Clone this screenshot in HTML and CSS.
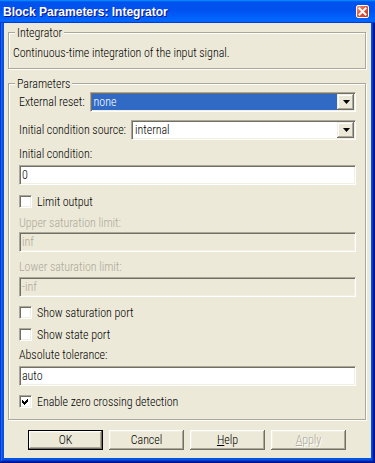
FILE: index.html
```html
<!DOCTYPE html>
<html>
<head>
<meta charset="utf-8">
<title>Block Parameters: Integrator</title>
<link rel="stylesheet" href="styles.css">
</head>
<body>
<div class="window">
  <div class="titlebar">
    <span class="title">Block Parameters: Integrator</span>
    <span class="close" aria-label="Close">
      <svg width="11" height="11" viewBox="0 0 11 11"><path d="M2.5 2.5 L8.5 8.5 M8.5 2.5 L2.5 8.5" stroke="#fff" stroke-width="2" stroke-linecap="square"/></svg>
    </span>
  </div>
  <div class="client">
    <fieldset class="group group-desc">
      <legend>Integrator</legend>
      <p class="desc">Continuous-time integration of the input signal.</p>
    </fieldset>

    <fieldset class="group group-params">
      <legend>Parameters</legend>
      <div class="params">
        <div class="inline-field">
          <span class="label">External reset:</span>
          <div class="combo">
            <span class="combo-value selected">none</span>
            <span class="combo-btn"><svg width="7" height="4" viewBox="0 0 7 4"><path d="M0 0 H7 L3.5 4 Z" fill="#000"/></svg></span>
          </div>
        </div>
        <div class="inline-field mt-8">
          <span class="label">Initial condition source:</span>
          <div class="combo">
            <span class="combo-value">internal</span>
            <span class="combo-btn"><svg width="7" height="4" viewBox="0 0 7 4"><path d="M0 0 H7 L3.5 4 Z" fill="#000"/></svg></span>
          </div>
        </div>
        <span class="label block mt-7">Initial condition:</span>
        <div class="edit mt-4">0</div>
        <div class="check-row mt-10">
          <span class="checkbox"></span>
          <span class="check-label">Limit output</span>
        </div>
        <span class="label block disabled-text mt-8">Upper saturation limit:</span>
        <div class="edit disabled mt-2">inf</div>
        <span class="label block disabled-text mt-8">Lower saturation limit:</span>
        <div class="edit disabled mt-3">-inf</div>
        <div class="check-row mt-9">
          <span class="checkbox"></span>
          <span class="check-label">Show saturation port</span>
        </div>
        <div class="check-row mt-9">
          <span class="checkbox"></span>
          <span class="check-label">Show state port</span>
        </div>
        <span class="label block mt-7">Absolute tolerance:</span>
        <div class="edit mt-4">auto</div>
        <div class="check-row mt-9">
          <span class="checkbox checked"><svg width="11" height="11" viewBox="0 0 11 11"><path d="M2 4 L4 6 L8 2 L8 5 L4 9 L2 7 Z" fill="#000" shape-rendering="crispEdges"/></svg></span>
          <span class="check-label">Enable zero crossing detection</span>
        </div>
      </div>
    </fieldset>

    <div class="buttons">
      <span class="btn default">OK</span>
      <span class="btn">Cancel</span>
      <span class="btn"><u>H</u>elp</span>
      <span class="btn disabled"><u>A</u>pply</span>
    </div>
  </div>
</div>
</body>
</html>
```

FILE: styles.css
```css
* { box-sizing: border-box; }

html, body {
  margin: 0;
  padding: 0;
}

body {
  width: 375px;
  height: 463px;
  overflow: hidden;
  font-family: "Roboto Condensed", "Liberation Sans", Arial, sans-serif;
  font-size: 12px;
  font-weight: 300;
  letter-spacing: -0.04px;
  color: #000;
}

.window {
  width: 375px;
  height: 463px;
  display: flex;
  flex-direction: column;
  padding: 0 4px 5px 4px;
  background: #0055E5;
  box-shadow: inset -1px -1px #00138C, inset 1px 1px #0831D9, inset -2px -2px #001EA0, inset 2px 2px #166AEE, inset -3px -3px #003BDA, inset 3px 3px #0855DD;
}

.titlebar {
  height: 23px;
  margin: 0 -4px;
  padding: 0 6px 0 3px;
  display: flex;
  align-items: center;
  justify-content: space-between;
  background: linear-gradient(180deg, #0997FF, #0053EE 8%, #0050EE 40%, #0066FF 88%, #0066FF 93%, #005BFF 95%, #003DD7 96%, #003DD7);
}

.title {
  color: #fff;
  font-family: "Liberation Sans", Arial, sans-serif;
  font-weight: bold;
  font-size: 12px;
  letter-spacing: 0;
  line-height: 14px;
  text-shadow: 1px 1px #0F1089;
}

.close {
  width: 13px;
  height: 13px;
  border: 1px solid #fff;
  border-radius: 2px;
  background: linear-gradient(135deg, #F29B7E 0%, #E2573A 45%, #C73A1A 100%);
  display: flex;
  align-items: center;
  justify-content: center;
}

.close svg { display: block; }

.client {
  flex: 1;
  background: #ECE9D8;
  padding: 1px 5px 0 4px;
  display: flex;
  flex-direction: column;
}

.group {
  margin: 0;
  padding: 0;
  border: 1px solid #ACA899;
  box-shadow: inset 1px 1px #fff, 1px 1px #fff;
  min-inline-size: 0;
}

.group legend {
  margin-left: 6px;
  padding: 2px 2px 0 2px;
  line-height: 14px;
  background: #ECE9D8;
}

.desc {
  margin: 0;
  padding: 6px 4px 8px 4px;
  line-height: 14px;
}

.group-params {
  margin-top: 6px;
}

.params {
  display: flex;
  flex-direction: column;
  padding: 1px 9px 11px 10px;
}

.label {
  line-height: 14px;
  white-space: nowrap;
}

.label.block { display: block; }

.disabled-text { color: #ACA899; }

.inline-field {
  display: flex;
  align-items: center;
  gap: 5px;
  height: 20px;
}

.combo {
  flex: 1;
  height: 20px;
  display: flex;
  padding: 1px;
  border: 1px solid;
  border-color: #ACA899 #fff #fff #ACA899;
  box-shadow: inset 1px 1px #716F64, inset -1px -1px #F1EFE2;
  background: #fff;
}

.combo-value {
  flex: 1;
  line-height: 16px;
  padding-left: 2px;
  background: #fff;
}

.combo-value.selected {
  background: #316AC5;
  color: #fff;
}

.combo-btn {
  width: 17px;
  height: 16px;
  display: flex;
  align-items: center;
  justify-content: center;
  padding-left: 1px;
  background: #ECE9D8;
  box-shadow: inset -1px -1px #716F64, inset 1px 1px #F1EFE2, inset -2px -2px #ACA899, inset 2px 2px #fff;
}

.combo-btn svg { display: block; }

.edit {
  height: 20px;
  padding: 1px 1px 1px 2px;
  line-height: 16px;
  border: 1px solid;
  border-color: #ACA899 #fff #fff #ACA899;
  box-shadow: inset 1px 1px #716F64, inset -1px -1px #F1EFE2;
  background: #fff;
}

.edit.disabled {
  background: #ECE9D8;
  color: #ACA899;
}

.check-row {
  display: flex;
  align-items: center;
  height: 13px;
}

.checkbox {
  width: 13px;
  height: 13px;
  flex: none;
  padding: 0;
  border: 1px solid;
  border-color: #ACA899 #fff #fff #ACA899;
  box-shadow: inset 1px 1px #716F64, inset -1px -1px #F1EFE2;
  background: #fff;
  display: flex;
}

.checkbox svg { display: block; }

.check-label {
  margin-left: 5px;
  line-height: 14px;
  white-space: nowrap;
}

.mt-2 { margin-top: 2px; }
.mt-3 { margin-top: 3px; }
.mt-4 { margin-top: 4px; }
.mt-7 { margin-top: 7px; }
.mt-8 { margin-top: 8px; }
.mt-9 { margin-top: 9px; }
.mt-10 { margin-top: 10px; }

.buttons {
  margin-top: 10px;
  display: flex;
  justify-content: center;
  gap: 6px;
}

.btn {
  width: 75px;
  height: 20px;
  display: flex;
  align-items: center;
  justify-content: center;
  line-height: 14px;
  background: #ECE9D8;
  box-shadow: inset -1px -1px #716F64, inset 1px 1px #fff, inset -2px -2px #ACA899, inset 2px 2px #F1EFE2;
}

.btn.default {
  border: 1px solid #000;
}

.btn.disabled {
  color: #ACA899;
  text-shadow: 1px 1px #fff;
}

.btn u { text-decoration: underline; }
```
